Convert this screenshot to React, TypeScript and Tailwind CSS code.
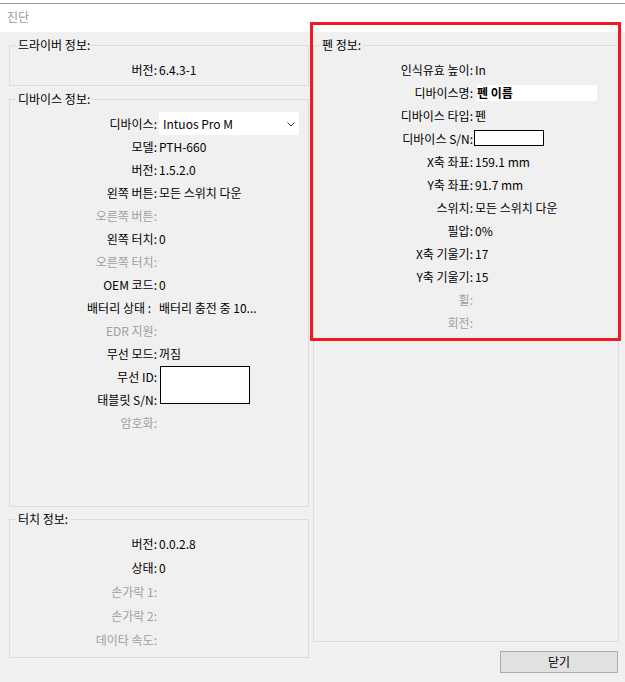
import React from 'react';

type RowProps = {
  label: string;
  disabled?: boolean;
  labelClass: string;
  rowClass: string;
  children?: React.ReactNode;
};

const Row = ({ label, disabled, labelClass, rowClass, children }: RowProps) => (
  <div className={`relative flex items-center ${rowClass}`}>
    <span
      className={`shrink-0 text-right whitespace-nowrap ${labelClass} ${
        disabled ? 'text-[#a0a0a0]' : 'text-black'
      }`}
    >
      {label}
    </span>
    <div className="ml-[2px] flex items-center whitespace-nowrap text-black">{children}</div>
  </div>
);

const GroupBox = ({
  title,
  className,
  children,
}: {
  title: string;
  className: string;
  children?: React.ReactNode;
}) => (
  <fieldset className={`border border-[#dcdcdc] ${className}`}>
    <legend className="ml-[6px] px-[2px] text-[12px] leading-[14px] text-black">{title}</legend>
    {children}
  </fieldset>
);

const L = 'w-[147px]';
const P = 'w-[159px]';

const deviceRows: { label: string; value?: string; disabled?: boolean }[] = [
  { label: '모델:', value: 'PTH-660' },
  { label: '버전:', value: '1.5.2.0' },
  { label: '왼쪽 버튼:', value: '모든 스위치 다운' },
  { label: '오른쪽 버튼:', disabled: true },
  { label: '왼쪽 터치:', value: '0' },
  { label: '오른쪽 터치:', disabled: true },
  { label: 'OEM 코드:', value: '0' },
];

const penRows: { label: string; value?: string; disabled?: boolean }[] = [
  { label: 'X축 좌표:', value: '159.1 mm' },
  { label: 'Y축 좌표:', value: '91.7 mm' },
  { label: '스위치:', value: '모든 스위치 다운' },
  { label: '필압:', value: '0%' },
  { label: 'X축 기울기:', value: '17' },
  { label: 'Y축 기울기:', value: '15' },
  { label: '휠:', disabled: true },
  { label: '회전:', disabled: true },
];

const touchRows: { label: string; value?: string; disabled?: boolean }[] = [
  { label: '버전:', value: '0.0.2.8' },
  { label: '상태:', value: '0' },
  { label: '손가락 1:', disabled: true },
  { label: '손가락 2:', disabled: true },
  { label: '데이타 속도:', disabled: true },
];

export default function App() {
  return (
    <div className="relative flex h-[682px] w-[625px] flex-col overflow-hidden bg-[#f0f0f0] font-['Noto_Sans_CJK_KR','Noto_Sans',sans-serif] text-[12px] leading-[16px]">
      {/* edge of the window behind */}
      <div className="h-[4px] shrink-0 border-b border-[#9a9a9a] bg-white" />

      {/* title bar */}
      <div className="flex h-[28px] shrink-0 items-center bg-white pl-[7px] pb-[2px] text-[#999999]">진단</div>

      {/* body */}
      <div className="flex flex-1 pt-[6px] pl-[9px]">
        <div className="flex w-[300px] flex-col">
          <GroupBox title="드라이버 정보:" className="h-[48px]">
            <div className="pt-[6px]">
              <Row label="버전:" labelClass={L} rowClass="h-[23px]">6.4.3-1</Row>
            </div>
          </GroupBox>

          <GroupBox title="디바이스 정보:" className="mt-[6px] h-[415px]">
            <div className="pt-[6px]">
              <Row label="디바이스:" labelClass={L} rowClass="h-[23px]">
                <div className="flex h-[23px] w-[140px] items-center justify-between bg-white pl-[4px] pr-[4px]">
                  <span>Intuos Pro M</span>
                  <svg width="8" height="5" viewBox="0 0 8 5" className="mt-[1px]">
                    <polyline points="0.5,0.5 4,4 7.5,0.5" fill="none" stroke="#333" strokeWidth="1" />
                  </svg>
                </div>
              </Row>
              {deviceRows.map((r) => (
                <Row key={r.label} label={r.label} disabled={r.disabled} labelClass={L} rowClass="h-[23px]">
                  {r.value}
                </Row>
              ))}
              <Row label="배터리 상태 :" labelClass={`${L} pr-[6px]`} rowClass="h-[23px]">
                배터리 충전 중 10...
              </Row>
              <Row label="EDR 지원:" disabled labelClass={L} rowClass="h-[23px]" />
              <Row label="무선 모드:" labelClass={L} rowClass="h-[23px]">꺼짐</Row>
              <Row label="무선 ID:" labelClass={L} rowClass="h-[23px]">
                <div className="absolute left-[150px] top-[1px] h-[38px] w-[90px] border border-black bg-white" />
              </Row>
              <Row label="태블릿 S/N:" labelClass={L} rowClass="h-[23px]" />
              <Row label="암호화:" disabled labelClass={L} rowClass="h-[23px]" />
            </div>
          </GroupBox>

          <GroupBox title="터치 정보:" className="mt-[5px] h-[146px]">
            <div className="pt-[6px]">
              {touchRows.map((r) => (
                <Row key={r.label} label={r.label} disabled={r.disabled} labelClass={L} rowClass="h-[24px]">
                  {r.value}
                </Row>
              ))}
            </div>
          </GroupBox>
        </div>

        <div className="ml-[4px] flex w-[306px] flex-col">
          <GroupBox title="펜 정보:" className="h-[604px]">
            <div className="pt-[6px]">
              <Row label="인식유효 높이:" labelClass={P} rowClass="h-[23px]">In</Row>
              <Row label="디바이스명:" labelClass={P} rowClass="h-[23px]">
                <span className="ml-[2px] flex h-[16px] w-[120px] items-center bg-white font-bold">펜 이름</span>
              </Row>
              <Row label="디바이스 타입:" labelClass={P} rowClass="h-[23px]">펜</Row>
              <Row label="디바이스 S/N:" labelClass={P} rowClass="h-[23px]">
                <span className="-ml-[1px] -mt-[2px] block h-[16px] w-[70px] border border-black bg-white" />
              </Row>
              {penRows.map((r) => (
                <Row key={r.label} label={r.label} disabled={r.disabled} labelClass={P} rowClass="h-[23px]">
                  {r.value}
                </Row>
              ))}
            </div>
          </GroupBox>
          <button className="mt-[9px] mr-[1px] flex h-[22px] w-[118px] items-center justify-center self-end border border-[#adadad] bg-[#e1e1e1] text-black">
            닫기
          </button>
        </div>
      </div>

      {/* highlight annotation */}
      <div className="pointer-events-none absolute left-[310px] top-[22px] h-[319px] w-[311px] border-[3px] border-[#ed1c24]" />
    </div>
  );
}
